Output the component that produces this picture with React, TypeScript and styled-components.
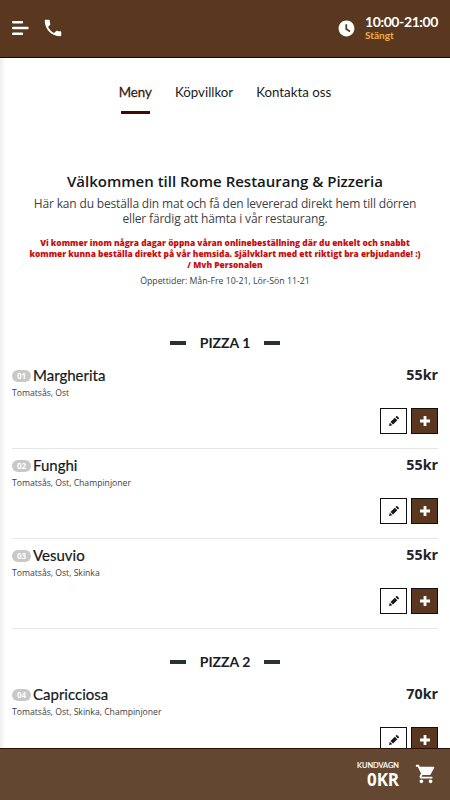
import React from "react";
import styled, { createGlobalStyle } from "styled-components";

const Global = createGlobalStyle`
  * { box-sizing: border-box; }
  html, body { margin: 0; padding: 0; }
  body { background: #fff; color: #1f2629; font-family: "Open Sans", sans-serif; overflow: hidden; }
  h1, h2, h3, p { margin: 0; font-weight: inherit; }
  button { padding: 0; font: inherit; cursor: pointer; }
  svg { display: block; flex: none; }
`;

const Screen = styled.div`
  display: flex;
  flex-direction: column;
  width: 450px;
  height: 800px;
  overflow: hidden;
`;

const Header = styled.header`
  display: flex;
  align-items: center;
  flex: none;
  height: 58px;
  padding: 0 12px 1px;
  background: #59381f;
  border-bottom: 1px solid #150a03;
  color: #fff;
`;

const IconButton = styled.button`
  display: flex;
  background: none;
  border: 0;
  color: inherit;
  margin-right: 13px;
`;

const OpenStatus = styled.div`
  display: flex;
  align-items: center;
  gap: 9px;
  margin-left: auto;
  font-family: Lato, sans-serif;
  white-space: nowrap;
`;

const StatusText = styled.div`
  margin-top: -2px;
`;

const Hours = styled.div`
  font-size: 14px;
  letter-spacing: -0.4px;
  line-height: 15px;
  font-weight: 700;
`;

const Closed = styled.div`
  font-size: 10px;
  line-height: 12px;
  font-weight: 700;
  color: #f0ad45;
`;

const Content = styled.main`
  flex: 1;
  min-height: 0;
  overflow: hidden;
  padding: 0 12px;
  background: linear-gradient(to right, #efefef, #fff 6px);
`;

const Nav = styled.nav`
  display: flex;
  justify-content: center;
  gap: 23px;
  padding-top: 24px;
  height: 113px;
  font-family: Lato, sans-serif;
  font-size: 13.3px;
  line-height: 20px;
  white-space: nowrap;
`;

const NavLink = styled.a<{ $active?: boolean }>`
  display: flex;
  flex-direction: column;
  align-items: center;
  color: ${(p) => (p.$active ? "#3a1d0d" : "#1c1c1c")};
  -webkit-text-stroke: ${(p) => (p.$active ? "0.3px" : "0")};
  &::after {
    content: "";
    display: ${(p) => (p.$active ? "block" : "none")};
    width: 29px;
    height: 3px;
    margin-top: 9px;
    background: #3c0d08;
  }
`;

const Intro = styled.section`
  text-align: center;
  white-space: nowrap;
  height: 139px;
`;

const Title = styled.h1`
  font-size: 15px;
  line-height: 20px;
  font-weight: 600;
  color: #12191c;
`;

const Lead = styled.p`
  margin-top: 5px;
  font-size: 12px;
  letter-spacing: -0.17px;
  line-height: 15px;
  color: #3d4245;
`;

const Notice = styled.p`
  margin-top: 11px;
  font-size: 8.4px;
  line-height: 11px;
  font-weight: 800;
  color: #c90d0d;
`;

const Times = styled.p`
  margin-top: 5px;
  font-size: 8.75px;
  line-height: 13px;
  color: #3a3f42;
`;

const Category = styled.h2`
  display: flex;
  align-items: center;
  justify-content: center;
  gap: 14px;
  height: 49px;
  padding-top: 16px;
  font-family: Lato, sans-serif;
  font-size: 14px;
  line-height: 18px;
  font-weight: 700;
  color: #182023;
  &::before, &::after {
    content: "";
    width: 16px;
    height: 4px;
    background: #263238;
  }
`;

const Item = styled.article`
  display: flex;
  flex-direction: column;
  height: 90px;
  padding-top: 6px;
  border-bottom: 1px solid #e6e6e6;
`;

const ItemHead = styled.div`
  display: flex;
  align-items: center;
  height: 21px;
`;

const Badge = styled.span`
  width: 19px;
  height: 12px;
  margin-right: 3px;
  border-radius: 6px;
  background: #c8c8c8;
  color: #fff;
  font-size: 8px;
  line-height: 12px;
  font-weight: 700;
  text-align: center;
`;

const Name = styled.h3`
  margin: -2px 0 0 -1px;
  font-family: Lato, sans-serif;
  font-size: 15px;
  line-height: 20px;
  color: #14191b;
  -webkit-text-stroke: 0.2px;
`;

const Price = styled.span`
  margin: -2px 0 0 auto;
  font-size: 14.3px;
  line-height: 20px;
  font-weight: 700;
`;

const Ingredients = styled.p`
  margin-top: 1px;
  font-size: 8.65px;
  line-height: 13px;
  color: #3c4144;
`;

const Actions = styled.div`
  display: flex;
  justify-content: flex-end;
  gap: 4px;
  margin-top: 8px;
`;

const ActionButton = styled.button<{ $primary?: boolean }>`
  display: flex;
  align-items: center;
  justify-content: center;
  width: 27px;
  height: 26px;
  border: 1px solid #101010;
  background: ${(p) => (p.$primary ? "#59381f" : "#fff")};
  color: ${(p) => (p.$primary ? "#fff" : "#151515")};
`;

const CartBar = styled.footer`
  display: flex;
  align-items: center;
  justify-content: flex-end;
  gap: 16px;
  flex: none;
  height: 52px;
  padding: 0 13px 2px 0;
  background: #634730;
  border-top: 1px solid #2a0f08;
  color: #fff;
`;

const CartTotal = styled.div`
  text-align: right;
  padding-top: 2px;
`;

const CartLabel = styled.div`
  font-family: Lato, sans-serif;
  font-size: 7.4px;
  line-height: 9px;
  -webkit-text-stroke: 0.2px;
`;

const CartSum = styled.div`
  font-size: 17px;
  letter-spacing: -0.1px;
  line-height: 19px;
  font-weight: 700;
`;

const Icon = ({ d, size }: { d: string; size: number }) => (
  <svg width={size} height={size} viewBox="0 0 24 24" fill="currentColor">
    <path d={d} />
  </svg>
);

const PHONE =
  "M6.62 10.79c1.44 2.83 3.76 5.14 6.59 6.59l2.2-2.2c.27-.27.67-.36 1.02-.24 1.12.37 2.33.57 3.57.57.55 0 1 .45 1 1V20c0 .55-.45 1-1 1-9.39 0-17-7.61-17-17 0-.55.45-1 1-1h3.5c.55 0 1 .45 1 1 0 1.25.2 2.45.57 3.57.11.35.03.74-.25 1.02l-2.2 2.2z";
const CLOCK =
  "M12 2C6.5 2 2 6.5 2 12s4.500 10 10 10 10-4.500 10-10S17.500 2 12 2zm3.800 14.600L10.600 13.200V6.500h2.200v5.500l4.200 2.700-1.200 1.900z";
const CART =
  "M7 18c-1.100 0-1.990.9-1.990 2S5.900 22 7 22s2-.9 2-2-.9-2-2-2zM1 2v2h2l3.600 7.590-1.350 2.450c-.16.280-.25.610-.25.960 0 1.100.9 2 2 2h12v-2H7.420c-.14 0-.25-.11-.25-.25l.03-.12.9-1.630h7.450c.75 0 1.410-.41 1.750-1.030l3.580-6.490A1 1 0 0 0 20 4H5.210l-.94-2H1zm16 16c-1.100 0-1.990.9-1.990 2s.89 2 1.990 2 2-.9 2-2-.9-2-2-2z";

const MenuIcon = () => (
  <svg width="17" height="16" viewBox="0 0 17 16" stroke="currentColor" strokeWidth="2.4" strokeLinecap="round">
    <path d="M1.200 2.200H10M1.200 8H15.500M1.200 13.800H10" />
  </svg>
);

const PencilIcon = () => (
  <svg width="12" height="12" viewBox="0 0 12 12" fill="currentColor">
    <path d="M1 11l.8-3.300 2.500 2.500L1 11zM2.500 7l4.300-4.300 2.500 2.500L5 9.500 2.500 7zM7.500 2l.8-.8c.3-.3.7-.3 1 0l1.500 1.500c.3.300.3.700 0 1l-.8.800L7.500 2z" />
  </svg>
);

const PlusIcon = () => (
  <svg width="10" height="10" viewBox="0 0 10 10" fill="currentColor">
    <path d="M3.600 0h2.800v3.600H10v2.800H6.400V10H3.600V6.400H0V3.600h3.600z" />
  </svg>
);

type Dish = { no: string; name: string; ingredients: string; price: string };

const MENU: { title: string; dishes: Dish[] }[] = [
  {
    title: "PIZZA 1",
    dishes: [
      { no: "01", name: "Margherita", ingredients: "Tomatsås, Ost", price: "55kr" },
      { no: "02", name: "Funghi", ingredients: "Tomatsås, Ost, Champinjoner", price: "55kr" },
      { no: "03", name: "Vesuvio", ingredients: "Tomatsås, Ost, Skinka", price: "55kr" },
    ],
  },
  {
    title: "PIZZA 2",
    dishes: [{ no: "04", name: "Capricciosa", ingredients: "Tomatsås, Ost, Skinka, Champinjoner", price: "70kr" }],
  },
];

const MenuItem = ({ dish }: { dish: Dish }) => (
  <Item>
    <ItemHead>
      <Badge>{dish.no}</Badge>
      <Name>{dish.name}</Name>
      <Price>{dish.price}</Price>
    </ItemHead>
    <Ingredients>{dish.ingredients}</Ingredients>
    <Actions>
      <ActionButton aria-label="Ändra"><PencilIcon /></ActionButton>
      <ActionButton $primary aria-label="Lägg till"><PlusIcon /></ActionButton>
    </Actions>
  </Item>
);

export default function App() {
  return (
    <>
      <Global />
      <Screen>
        <Header>
          <IconButton aria-label="Meny"><MenuIcon /></IconButton>
          <IconButton aria-label="Ring"><Icon d={PHONE} size={22} /></IconButton>
          <OpenStatus>
            <Icon d={CLOCK} size={19} />
            <StatusText>
              <Hours>10:00-21:00</Hours>
              <Closed>Stängt</Closed>
            </StatusText>
          </OpenStatus>
        </Header>
        <Content>
          <Nav>
            <NavLink $active>Meny</NavLink>
            <NavLink>Köpvillkor</NavLink>
            <NavLink>Kontakta oss</NavLink>
          </Nav>
          <Intro>
            <Title>Välkommen till Rome Restaurang &amp; Pizzeria</Title>
            <Lead>
              Här kan du beställa din mat och få den levererad direkt hem till dörren<br />
              eller färdig att hämta i vår restaurang.
            </Lead>
            <Notice>
              Vi kommer inom några dagar öppna våran onlinebeställning där du enkelt och snabbt<br />
              kommer kunna beställa direkt på vår hemsida. Självklart med ett riktigt bra erbjudande! :)<br />
              / Mvh Personalen
            </Notice>
            <Times>Öppettider: Mån-Fre 10-21, Lör-Sön 11-21</Times>
          </Intro>
          {MENU.map((category) => (
            <section key={category.title}>
              <Category>{category.title}</Category>
              {category.dishes.map((dish) => <MenuItem key={dish.no} dish={dish} />)}
            </section>
          ))}
        </Content>
        <CartBar>
          <CartTotal>
            <CartLabel>KUNDVAGN</CartLabel>
            <CartSum>0KR</CartSum>
          </CartTotal>
          <Icon d={CART} size={22} />
        </CartBar>
      </Screen>
    </>
  );
}
